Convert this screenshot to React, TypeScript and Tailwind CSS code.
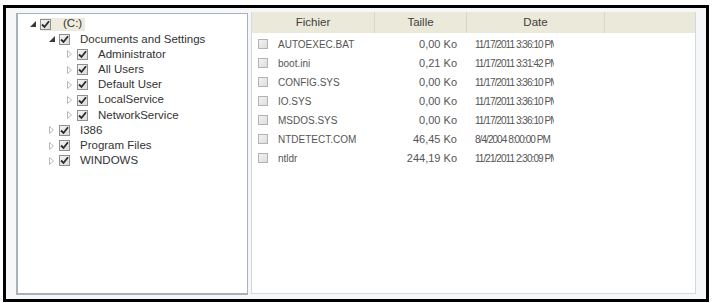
import React from 'react';

interface INode {
    label: string;
    level: number;
    expanded: boolean;
    selected?: boolean;
}

interface IFile {
    name: string;
    size: string;
    date: string;
}

const nodes: INode[] = [
    { label: '(C:)', level: 0, expanded: true, selected: true },
    { label: 'Documents and Settings', level: 1, expanded: true },
    { label: 'Administrator', level: 2, expanded: false },
    { label: 'All Users', level: 2, expanded: false },
    { label: 'Default User', level: 2, expanded: false },
    { label: 'LocalService', level: 2, expanded: false },
    { label: 'NetworkService', level: 2, expanded: false },
    { label: 'I386', level: 1, expanded: false },
    { label: 'Program Files', level: 1, expanded: false },
    { label: 'WINDOWS', level: 1, expanded: false },
];

const files: IFile[] = [
    { name: 'AUTOEXEC.BAT', size: '0,00 Ko', date: '11/17/2011 3:36:10 PM' },
    { name: 'boot.ini', size: '0,21 Ko', date: '11/17/2011 3:31:42 PM' },
    { name: 'CONFIG.SYS', size: '0,00 Ko', date: '11/17/2011 3:36:10 PM' },
    { name: 'IO.SYS', size: '0,00 Ko', date: '11/17/2011 3:36:10 PM' },
    { name: 'MSDOS.SYS', size: '0,00 Ko', date: '11/17/2011 3:36:10 PM' },
    { name: 'NTDETECT.COM', size: '46,45 Ko', date: '8/4/2004 8:00:00 PM' },
    { name: 'ntldr', size: '244,19 Ko', date: '11/21/2011 2:30:09 PM' },
];

const indent = ['pl-[12px]', 'pl-[31px]', 'pl-[49px]'];

const Expander = ({ expanded }: { expanded: boolean }) =>
    expanded ? (
        <svg width="6" height="6" viewBox="0 0 6 6">
            <polygon points="6,0 6,6 0,6" fill="#3a3a3a" />
        </svg>
    ) : (
        <svg width="5" height="8" viewBox="0 0 5 8">
            <polygon points="0.5,0.5 4.5,4 0.5,7.5" fill="none" stroke="#b8b8b8" strokeWidth="1" />
        </svg>
    );

const CheckedBox = () => (
    <span className="flex h-[11px] w-[11px] items-center justify-center border border-[#8e8f8f] bg-gradient-to-br from-[#f4f4f4] to-[#dcdcdc]">
        <svg width="9" height="9" viewBox="0 0 9 9">
            <path d="M1 4.5 L3.5 7 L8 1.2" fill="none" stroke="#2b2b2b" strokeWidth="1.8" />
        </svg>
    </span>
);

const EmptyBox = () => (
    <span className="block h-[10px] w-[10px] border border-[#b3b3b3] bg-gradient-to-br from-[#f2f2f2] to-[#dedede]" />
);

const TreeRow = ({ node }: { node: INode }) => (
    <div className={`flex h-[15.2px] items-center ${indent[node.level]}`}>
        <span className="flex w-[10px] items-center">
            <Expander expanded={node.expanded} />
        </span>
        <span className={`flex h-[13px] items-center ${node.selected ? 'bg-[#edebde] pr-[3px]' : ''}`}>
            <CheckedBox />
            <span className={node.selected ? 'ml-[12px]' : 'ml-[10px]'}>{node.label}</span>
        </span>
    </div>
);

export default function App() {
    return (
        <div className="h-[303px] w-[712px] bg-white pl-[3px] pt-[5px] font-['Liberation_Sans',Arial,sans-serif]">
            <div className="flex h-[297px] w-[706px] border-[3px] border-black bg-[#f5f7f9]">
                {/* folder tree */}
                <div className="ml-[10px] mt-[5px] h-[282px] w-[232px] border border-b-2 border-l-2 border-[#a9b0b8] bg-white pt-[2.5px] text-[11.5px] text-[#333]">
                    {nodes.map((n) => (
                        <TreeRow key={n.label} node={n} />
                    ))}
                </div>

                {/* file grid */}
                <div className="ml-[3px] mt-[4px] h-[282px] w-[445px] border-b border-l border-r border-[#d4d8dc] bg-white text-[#555]">
                    <div className="flex h-[21px] items-center bg-[#ebe9d9] text-[11.5px] text-[#404040]">
                        <div className="flex h-full w-[123px] items-center justify-center border-r border-[#dad7c5]">Fichier</div>
                        <div className="flex h-full w-[92px] items-center justify-center border-r border-[#dad7c5]">Taille</div>
                        <div className="flex h-full w-[138px] items-center justify-center border-r border-[#dad7c5]">Date</div>
                        <div className="flex-1" />
                    </div>
                    <div className="pt-[1.5px] text-[11px]">
                        {files.map((f) => (
                            <div key={f.name} className="flex h-[19px] items-center">
                                <div className="flex w-[123px] items-center pl-[6px]">
                                    <EmptyBox />
                                    <span className="ml-[10px] whitespace-nowrap text-[10px]">{f.name}</span>
                                </div>
                                <div className="w-[92px] whitespace-nowrap pr-[10px] text-right">{f.size}</div>
                                <div className="w-[138px] pl-[8px]">
                                    <div className="w-[79px] overflow-hidden whitespace-nowrap text-[10px] tracking-[-0.95px]">{f.date}</div>
                                </div>
                            </div>
                        ))}
                    </div>
                </div>
            </div>
        </div>
    );
}
